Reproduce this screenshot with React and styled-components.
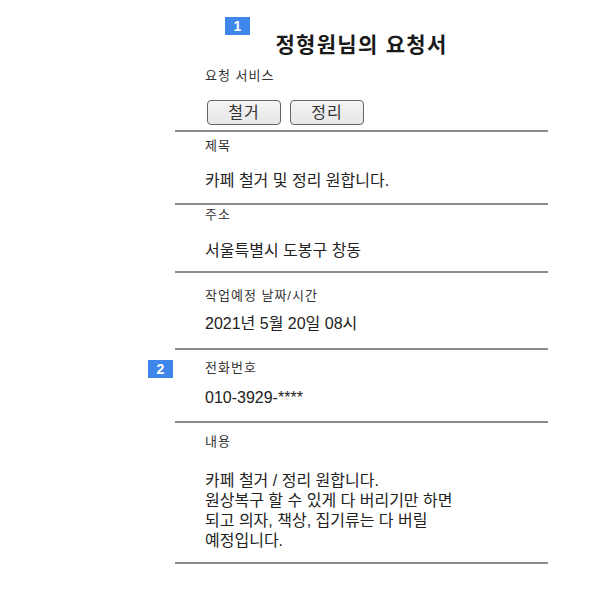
import React from "react";
import styled, { createGlobalStyle } from "styled-components";

const GlobalStyle = createGlobalStyle`
  body {
    margin: 0;
    background: #ffffff;
    font-family: "Liberation Sans", "Noto Sans CJK KR", sans-serif;
    color: #222;
  }
`;

const fields = [
  { label: "제목", value: "카페 철거 및 정리 원합니다.", pt: 6, gap: 17, pb: 12 },
  { label: "주소", value: "서울특별시 도봉구 창동", pt: 2, gap: 18, pb: 10 },
  { label: "작업예정 날짜/시간", value: "2021년 5월 20일 08시", pt: 15, gap: 10, pb: 14 },
  { label: "전화번호", value: "010-3929-****", pt: 10, gap: 12, pb: 13, badge: "2" }
];

function App() {
  return (
    <>
      <GlobalStyle />
      <Sheet>
        <Header>
          <Badge top={17} left={50}>1</Badge>
          <Title>정형원님의 요청서</Title>
          <Label>요청 서비스</Label>
          <Services>
            <ServiceButton>철거</ServiceButton>
            <ServiceButton>정리</ServiceButton>
          </Services>
        </Header>
        {fields.map((f) => (
          <Field key={f.label} pt={f.pt} pb={f.pb}>
            {f.badge && <Badge top={f.pt} left={-27}>{f.badge}</Badge>}
            <Label>{f.label}</Label>
            <Value gap={f.gap}>{f.value}</Value>
          </Field>
        ))}
        <Field pt={11} pb={11}>
          <Label>내용</Label>
          <Value gap={21}>
            카페 철거 / 정리 원합니다.
            <br />
            원상복구 할 수 있게 다 버리기만 하면
            <br />
            되고 의자, 책상, 집기류는 다 버릴
            <br />
            예정입니다.
          </Value>
        </Field>
      </Sheet>
    </>
  );
}

export default App;

const Sheet = styled.div`
  position: relative;
  width: 373px;
  margin-left: 175px;
`;

const Header = styled.div`
  position: relative;
  padding: 33px 0 5px 30px;
  border-bottom: 2px solid #8a8a8a;
`;

const Title = styled.h1`
  margin: 0 0 11px -30px;
  text-align: center;
  font-size: 21px;
  line-height: 24px;
  letter-spacing: 1.3px;
  font-weight: 700;
  color: #1a1a1a;
`;

const Badge = styled.div`
  position: absolute;
  top: ${(p) => p.top}px;
  left: ${(p) => p.left}px;
  width: 25px;
  height: 18px;
  background: #3f86ea;
  color: #fff;
  font-family: "Liberation Sans", Arial, sans-serif;
  font-size: 14px;
  font-weight: 700;
  line-height: 18px;
  text-align: center;
`;

const Label = styled.div`
  font-size: 13px;
  line-height: 16px;
  color: #333;
  letter-spacing: 1px;
`;

const Services = styled.div`
  display: flex;
  gap: 9px;
  margin-top: 16px;
  margin-left: 2px;
`;

const ServiceButton = styled.div`
  box-sizing: border-box;
  width: 74px;
  height: 25px;
  border: 1px solid #666;
  border-radius: 4px;
  background: linear-gradient(#f4f4f4, #e6e6e6);
  font-size: 16px;
  line-height: 23px;
  letter-spacing: 1px;
  text-align: center;
  color: #333;
`;

const Field = styled.div`
  position: relative;
  padding: ${(p) => p.pt}px 0 ${(p) => p.pb}px 30px;
  border-bottom: 2px solid #8a8a8a;
`;

const Value = styled.div`
  margin-top: ${(p) => p.gap}px;
  font-size: 16px;
  line-height: 20px;
  color: #222;
`;
